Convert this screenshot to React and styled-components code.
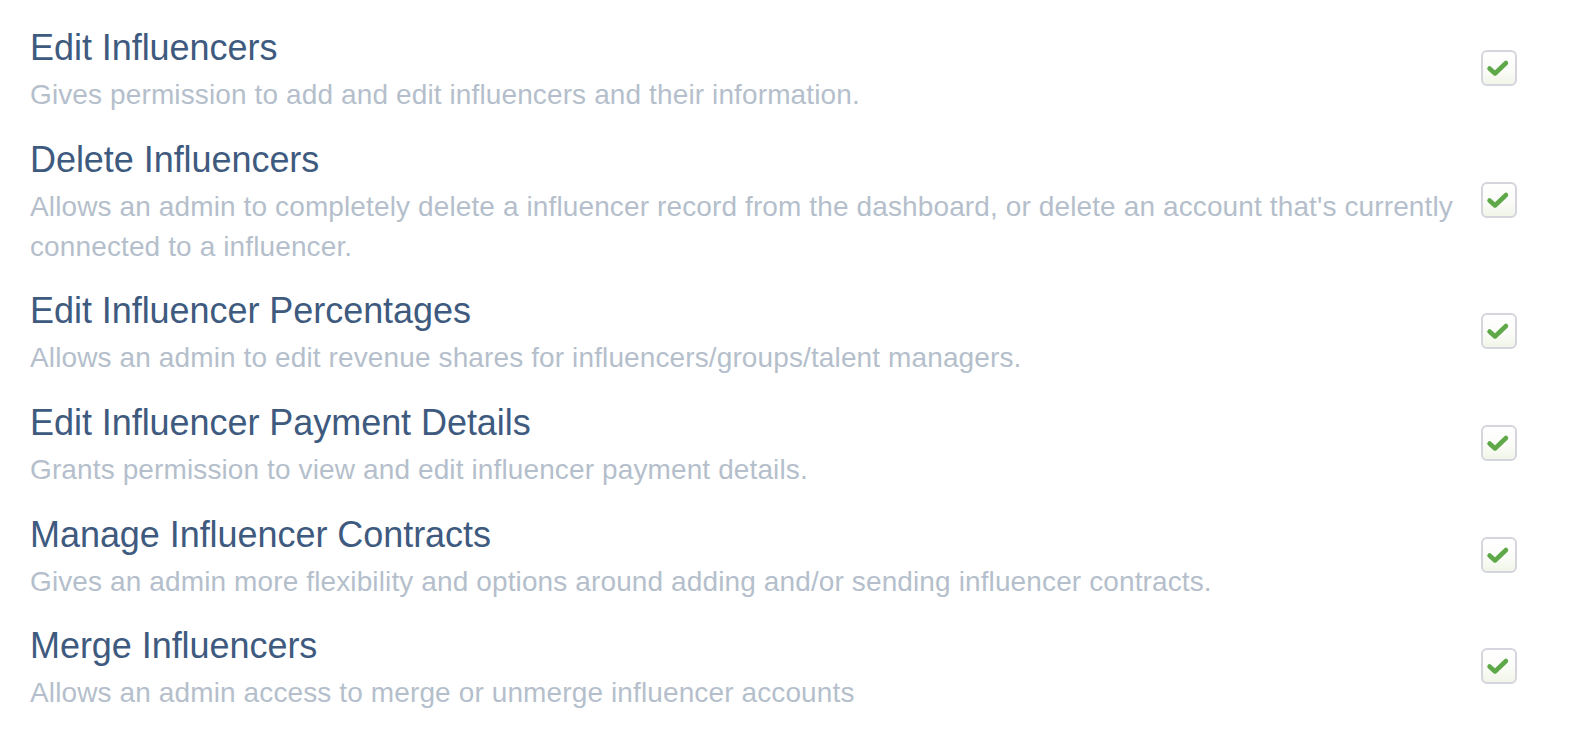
import React from "react";
import styled, { createGlobalStyle } from "styled-components";

const GlobalStyle = createGlobalStyle`
  html, body {
    margin: 0;
    padding: 0;
    background: #ffffff;
  }
  body {
    font-family: "Liberation Sans", Arial, Helvetica, sans-serif;
    -webkit-font-smoothing: antialiased;
  }
`;

const List = styled.div`
  display: flex;
  flex-direction: column;
  padding: 16px 63px 0 30px;
`;

const Row = styled.div`
  display: flex;
  align-items: center;
  padding: 12px 0 12.7px;
`;

const TextCol = styled.div`
  flex: 1;
  min-width: 0;
`;

const Title = styled.div`
  font-size: 36px;
  line-height: 40px;
  color: #3e5a7f;
  letter-spacing: -0.05px;
`;

const Description = styled.div`
  margin-top: 7px;
  font-size: 28px;
  line-height: 40px;
  letter-spacing: 0.12px;
  color: #b5bfcc;
`;

const CheckBox = styled.div`
  flex: 0 0 auto;
  width: 36px;
  height: 36px;
  box-sizing: border-box;
  margin: 0 0 7px 20px;
  border: 2px solid #d4d5dd;
  border-radius: 6px;
  background: linear-gradient(to bottom, #ffffff 0%, #fbfcf8 55%, #f1f5e8 100%);
  display: flex;
  align-items: center;
  justify-content: center;
`;

const CheckIcon = () => (
  <svg width="36" height="36" viewBox="0 0 36 36" style={{ margin: -2 }}>
    <polyline
      points="8.5,18.5 14,23.5 25,13"
      fill="none"
      stroke="#5fa84a"
      strokeWidth="4.5"
      strokeLinecap="round"
      strokeLinejoin="round"
    />
  </svg>
);

const items = [
  {
    title: "Edit Influencers",
    desc: "Gives permission to add and edit influencers and their information.",
  },
  {
    title: "Delete Influencers",
    desc: "Allows an admin to completely delete a influencer record from the dashboard, or delete an account that's currently connected to a influencer.",
  },
  {
    title: "Edit Influencer Percentages",
    desc: "Allows an admin to edit revenue shares for influencers/groups/talent managers.",
  },
  {
    title: "Edit Influencer Payment Details",
    desc: "Grants permission to view and edit influencer payment details.",
  },
  {
    title: "Manage Influencer Contracts",
    desc: "Gives an admin more flexibility and options around adding and/or sending influencer contracts.",
  },
  {
    title: "Merge Influencers",
    desc: "Allows an admin access to merge or unmerge influencer accounts",
  },
];

export default function App() {
  return (
    <>
      <GlobalStyle />
      <List>
        {items.map((it) => (
          <Row key={it.title}>
            <TextCol>
              <Title>{it.title}</Title>
              <Description>{it.desc}</Description>
            </TextCol>
            <CheckBox>
              <CheckIcon />
            </CheckBox>
          </Row>
        ))}
      </List>
    </>
  );
}
